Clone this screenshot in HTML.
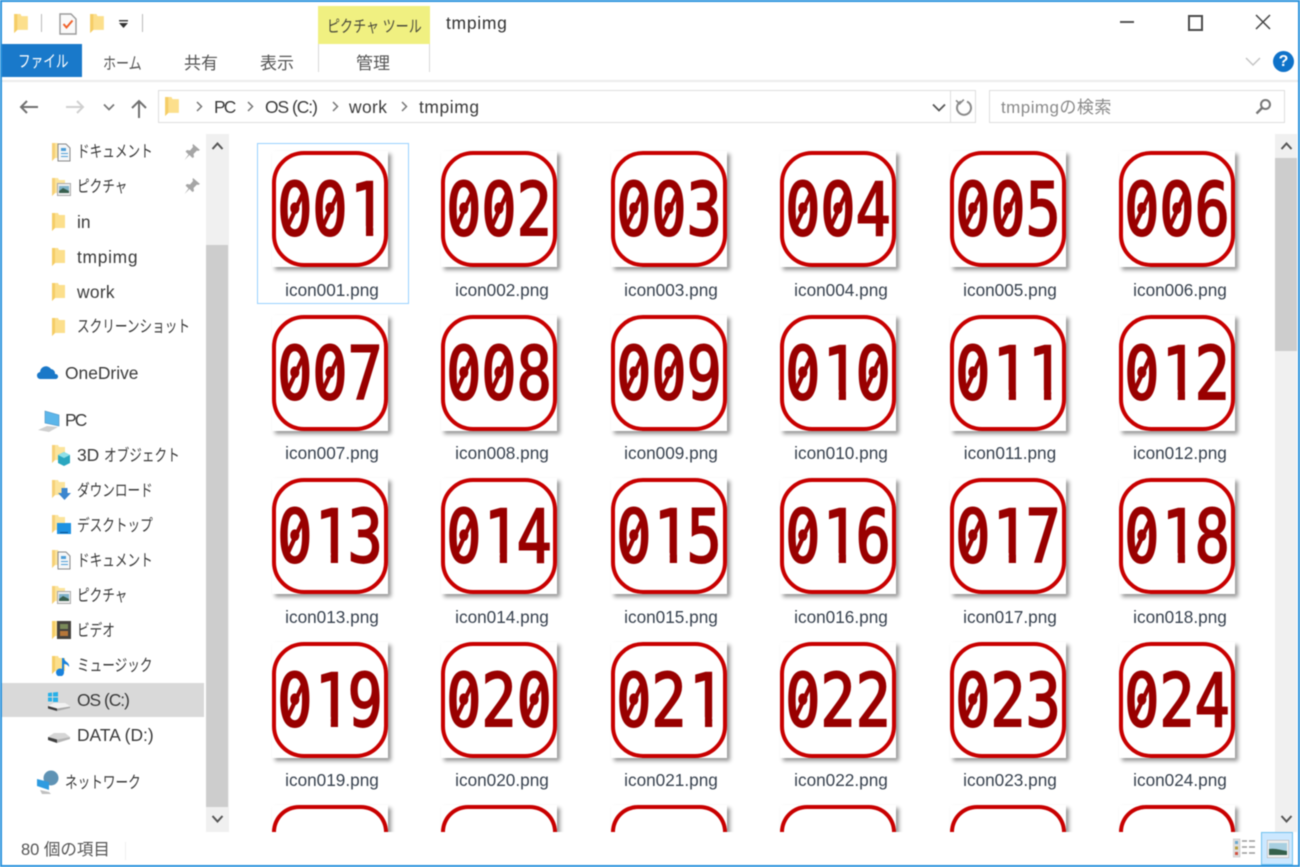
<!DOCTYPE html>
<html lang="ja"><head><meta charset="utf-8"><title>tmpimg</title>
<style>
html,body{margin:0;padding:0;background:#fff;width:1300px;height:867px;overflow:hidden}
#w{position:relative;width:1300px;height:867px;overflow:hidden;background:#fff;font-family:"Liberation Sans","Noto Sans CJK JP",sans-serif;font-size:17.4px;color:#3a3a3a;filter:blur(.45px)}
#w div,#w svg{position:absolute}
.t{line-height:20px;white-space:nowrap}
.j{display:inline-block;transform:scaleX(.765);transform-origin:0 50%;font-size:16.5px}
.ic{width:116px;height:116px;background:#fff;box-shadow:3px 3px 4px rgba(0,0,0,.42)}
.ic i{position:absolute;left:0;top:0;width:108px;height:108px;border:4px solid #c80000;border-radius:32px}
.ic.c{height:27px}
.ic.c i{height:23px;border-bottom:0;border-radius:32px 32px 0 0}
.ic b{position:absolute;left:-10px;width:136px;top:25px;height:70px;text-align:center;font:normal 73px/70px "DejaVu Sans Mono",monospace;color:#990000;-webkit-text-stroke:2px #990000;transform:scaleX(.8)}
.ic u,.ic s{position:relative;display:inline-block;text-decoration:none}
.ic u::after{content:"";position:absolute;left:19.500px;top:14.500px;width:5px;height:38px;background:#990000;transform:rotate(30deg)}
.ic s{left:3px;clip-path:polygon(0 0,100% 0,100% 50px,29px 50px,29px 100%,20px 100%,20px 50px,0 50px)}
.l{width:170px;text-align:center;line-height:20px;color:#38424f;font-size:17.2px}
</style></head><body>
<div id="w">
<svg width="0" height="0" style="left:0;top:0"><defs>
<symbol id="f" viewBox="0 0 13 19"><path d="M0 1h6l1 2h6v13H3l-3 3z" fill="#fcdf8c"/><path d="M0 1h3v15l-3 3z" fill="#f5cd66"/></symbol>
<symbol id="f2" viewBox="0 0 13 19"><path d="M0 1h6l1 2h6v13H3l-3 3z" fill="#fce49c"/><path d="M0 1h3v15l-3 3z" fill="#f6d077"/></symbol>
</defs></svg>

<!-- title -->
<svg style="left:14px;top:13px" width="15" height="20"><use href="#f" width="14" height="20"/></svg>
<div style="left:41px;top:14px;width:1px;height:18px;background:#bbb"></div>
<svg style="left:59px;top:13px" width="18" height="22" viewBox="0 0 18 22"><path d="M1 1h11l5 5v15H1z" fill="#fafafa" stroke="#9a9a9a" stroke-width="1.4"/><path d="M4.500 11l3 3.500 6-7" fill="none" stroke="#f0612a" stroke-width="2"/></svg>
<svg style="left:90px;top:13px" width="15" height="20"><use href="#f" width="14" height="20"/></svg>
<svg style="left:118px;top:19px" width="11" height="11"><rect x="1" y="1" width="9" height="1.500" fill="#444"/><path d="M1 4h9l-4.500 5z" fill="#333"/></svg>
<div style="left:142px;top:14px;width:1px;height:18px;background:#bbb"></div>

<div style="left:318px;top:6px;width:112px;height:38px;background:#f0f081"></div>
<div class="t" style="left:327px;top:16px;width:94px"><span class="j" style="color:#4c4c3c;transform:scaleX(.79)">ピクチャ ツール</span></div>
<div class="t" style="left:446px;top:13px;color:#333;font-size:17.5px;letter-spacing:.7px">tmpimg</div>

<div style="left:1120px;top:21px;width:14px;height:2px;background:#555"></div>
<div style="left:1188px;top:15px;width:11px;height:12px;border:2px solid #4a4a4a"></div>
<svg style="left:1255px;top:14px" width="16" height="16"><path d="M1 1l14 14M15 1L1 15" stroke="#444" stroke-width="1.500"/></svg>

<!-- ribbon -->
<div style="left:1px;top:44px;width:81px;height:33px;background:#1979ca"></div>
<div class="t" style="left:18px;top:51px;color:#fff"><span class="j" style="color:#fff">ファイル</span></div>
<div class="t" style="left:103px;top:53px"><span class="j" style="color:#555;transform:scaleX(.79)">ホーム</span></div>
<div class="t" style="left:184px;top:54px;font-size:17px;color:#555">共有</div>
<div class="t" style="left:260px;top:54px;font-size:17px;color:#555">表示</div>
<div style="left:318px;top:44px;width:1px;height:28px;background:#d8d8d8"></div>
<div style="left:429px;top:44px;width:1px;height:28px;background:#d8d8d8"></div>
<div class="t" style="left:356px;top:54px;font-size:17px;color:#555">管理</div>
<svg style="left:1245px;top:57px" width="16" height="10"><path d="M1 1l7 7 7-7" fill="none" stroke="#c4c4c4" stroke-width="1.500"/></svg>
<div style="left:1273px;top:51px;width:21px;height:21px;border-radius:50%;background:#0f72c9;color:#fff;font:bold 16px/21px 'Liberation Sans',sans-serif;text-align:center">?</div>
<div style="left:2px;top:80px;width:1296px;height:2px;background:#ebebeb"></div>

<!-- nav -->
<svg style="left:19px;top:99px" width="20" height="16"><path d="M19 8H2M8 2L2 8l6 6" fill="none" stroke="#707070" stroke-width="2"/></svg>
<svg style="left:65px;top:99px" width="20" height="16"><path d="M1 8h17M12 2l6 6-6 6" fill="none" stroke="#d0d0d0" stroke-width="2"/></svg>
<svg style="left:103px;top:103px" width="12" height="9"><path d="M1 1.500l5 5 5-5" fill="none" stroke="#777" stroke-width="1.700"/></svg>
<svg style="left:130px;top:99px" width="18" height="20"><path d="M9 19V2M2 9l7-7 7 7" fill="none" stroke="#707070" stroke-width="2"/></svg>
<div style="left:158px;top:90px;width:816px;height:31px;border:1px solid #dedede"></div>
<div style="left:950px;top:91px;width:1px;height:31px;background:#dedede"></div>
<svg style="left:165px;top:96px" width="15" height="20"><use href="#f" width="14" height="20"/></svg>
<svg style="left:195px;top:100px" width="9" height="13"><path d="M2 2l4.500 4.500L2 11" fill="none" stroke="#777" stroke-width="1.500"/></svg>
<div class="t" style="left:214px;top:97px;color:#3a3a3a;letter-spacing:-1.800px">PC</div>
<svg style="left:246px;top:100px" width="9" height="13"><path d="M2 2l4.500 4.500L2 11" fill="none" stroke="#777" stroke-width="1.500"/></svg>
<div class="t" style="left:265px;top:97px;color:#3a3a3a;letter-spacing:-1px">OS (C:)</div>
<svg style="left:331px;top:100px" width="9" height="13"><path d="M2 2l4.500 4.500L2 11" fill="none" stroke="#777" stroke-width="1.500"/></svg>
<div class="t" style="left:349px;top:97px;color:#3a3a3a;letter-spacing:.4px">work</div>
<svg style="left:400px;top:100px" width="9" height="13"><path d="M2 2l4.500 4.500L2 11" fill="none" stroke="#777" stroke-width="1.500"/></svg>
<div class="t" style="left:419px;top:97px;color:#3a3a3a;letter-spacing:.6px">tmpimg</div>
<svg style="left:932px;top:103px" width="14" height="10"><path d="M1 1.500l6 6 6-6" fill="none" stroke="#555" stroke-width="1.800"/></svg>
<svg style="left:954px;top:98px" width="19" height="19" viewBox="0 0 19 19"><path d="M7 3.500A7 7 0 1 0 13 3.500" fill="none" stroke="#8a8a8a" stroke-width="2"/><path d="M8 0v6H3" fill="none" stroke="#8a8a8a" stroke-width="1.600" transform="rotate(45 7 3)"/></svg>
<div style="left:989px;top:90px;width:294px;height:31px;border:1px solid #dedede"></div>
<div class="t" style="left:1001px;top:97.500px;color:#8a8a8a;font-size:17px;letter-spacing:.45px">tmpimgの検索</div>
<svg style="left:1255px;top:98px" width="17" height="17"><circle cx="10.500" cy="6.500" r="4.500" fill="none" stroke="#777" stroke-width="2"/><path d="M7 10l-5.500 5.500" stroke="#777" stroke-width="2.400"/></svg>

<!-- sidebar -->
<div style="left:2px;top:683px;width:202px;height:34px;background:#d9d9d9"></div>

<svg style="left:52px;top:142px" width="13" height="19"><use href="#f2" width="13" height="19"/></svg>
<svg style="left:57px;top:143px" width="14" height="19" viewBox="0 0 14 19"><path d="M1 1h8l4 4v13H1z" fill="#f4f6f8" stroke="#888"/><path d="M4 5h5v3H4zM4 10h7v1H4zM4 13h7v1H4z" fill="#4f9fd8"/></svg>
<svg style="left:52px;top:177px" width="13" height="19"><use href="#f2" width="13" height="19"/></svg>
<svg style="left:57px;top:183px" width="14" height="13" viewBox="0 0 14 13"><rect x=".5" y=".5" width="13" height="12" fill="#eee" stroke="#aaa"/><rect x="2" y="3" width="10" height="7" fill="#7fb2c8"/><path d="M2 8l4-3 6 3v2H2z" fill="#39604f"/></svg>
<svg style="left:52px;top:212px" width="13" height="19"><use href="#f" width="13" height="19"/></svg>
<svg style="left:52px;top:247px" width="13" height="19"><use href="#f" width="13" height="19"/></svg>
<svg style="left:52px;top:282px" width="13" height="19"><use href="#f" width="13" height="19"/></svg>
<svg style="left:52px;top:317px" width="13" height="19"><use href="#f" width="13" height="19"/></svg>
<svg style="left:37px;top:364px" width="22" height="16" viewBox="0 0 22 16"><path d="M4 15a3.500 3.500 0 0 1-1-7 6 6 0 0 1 11-3 4.500 4.500 0 0 1 4 5 2.500 2.500 0 0 1 1 5z" fill="#1a78c8"/></svg>
<svg style="left:37px;top:410px" width="24" height="22" viewBox="0 0 24 22"><path d="M8 1l14 4v11L8 13z" fill="#5cb6ea" stroke="#4a8fc0" stroke-width=".6"/><path d="M1 20l9-4 11 1-9 5z" fill="#cfcfcf"/></svg>
<svg style="left:52px;top:444px" width="13" height="19"><use href="#f2" width="13" height="19"/></svg>
<svg style="left:58px;top:452px" width="12" height="14" viewBox="0 0 12 14"><path d="M6 0l6 3v8l-6 3-6-3V3z" fill="#2aa7c0"/><path d="M6 0l6 3-6 3-6-3z" fill="#8fe0e8"/></svg>
<svg style="left:52px;top:479px" width="13" height="19"><use href="#f2" width="13" height="19"/></svg>
<svg style="left:58px;top:488px" width="13" height="12" viewBox="0 0 13 12"><path d="M3.500 0h6v5H13L6.500 12 0 5h3.500z" fill="#3b86cf"/></svg>
<svg style="left:52px;top:514px" width="13" height="19"><use href="#f2" width="13" height="19"/></svg>
<svg style="left:57px;top:523px" width="14" height="11"><rect width="14" height="11" fill="#1e92e2"/><rect x="3" y="9" width="8" height="1" fill="#0a4f90"/></svg>
<svg style="left:52px;top:549px" width="13" height="19"><use href="#f2" width="13" height="19"/></svg>
<svg style="left:57px;top:551px" width="14" height="19" viewBox="0 0 14 19"><path d="M1 1h8l4 4v13H1z" fill="#f4f6f8" stroke="#888"/><path d="M4 5h5v3H4zM4 10h7v1H4zM4 13h7v1H4z" fill="#4f9fd8"/></svg>
<svg style="left:52px;top:585px" width="13" height="19"><use href="#f2" width="13" height="19"/></svg>
<svg style="left:57px;top:591px" width="14" height="13" viewBox="0 0 14 13"><rect x=".5" y=".5" width="13" height="12" fill="#eee" stroke="#aaa"/><rect x="2" y="3" width="10" height="7" fill="#7fb2c8"/><path d="M2 8l4-3 6 3v2H2z" fill="#39604f"/></svg>
<svg style="left:52px;top:620px" width="13" height="19"><use href="#f" width="13" height="19"/></svg>
<svg style="left:57px;top:621px" width="14" height="18" viewBox="0 0 14 18"><rect width="14" height="18" fill="#45423e"/><rect x="3" y="3" width="8" height="5" fill="#7a8a5a"/><rect x="3" y="10" width="8" height="5" fill="#b5763a"/></svg>
<svg style="left:52px;top:655px" width="13" height="19"><use href="#f" width="13" height="19"/></svg>
<svg style="left:56px;top:657px" width="15" height="19" viewBox="0 0 15 19"><path d="M6 1h2c0 4 6 4 5 9-1-2-3-3-5-3v8a4 4 0 1 1-2-3z" fill="#1a82dc"/></svg>
<svg style="left:47px;top:692px" width="24" height="20" viewBox="0 0 24 20"><path d="M1 1l4-.500v4H1zM6 .500l5-.500v4.500H6zM1 5.500h4v4H1zM6 5.500h5V10H6z" fill="#27b0e8"/><path d="M1 14l6-3h11l5 3v1l-13 3z" fill="#f2f2f2"/><path d="M1 14l9 2.500V19l-9-2.500z" fill="#3a3a3a"/><path d="M10 16.500l13-2v1.500l-13 3z" fill="#a8a8a8"/></svg>
<svg style="left:47px;top:729px" width="24" height="16" viewBox="0 0 24 16"><path d="M1 8l6-4h11l5 4-13 2.500z" fill="#d6d6d6"/><path d="M1 8l9 2.500V14l-9-3z" fill="#3e3e3e"/><path d="M10 10.500l13-2.500v2l-13 4z" fill="#b4b4b4"/></svg>
<svg style="left:36px;top:770px" width="24" height="24" viewBox="0 0 24 24"><circle cx="15" cy="8" r="7.500" fill="#5f93b5"/><path d="M1 9l12 3v8L1 16z" fill="#2e9be0"/><path d="M4 20l9 2 2 2H6z" fill="#c0c0c0"/></svg>

<svg style="left:183px;top:143px" width="18" height="18" viewBox="0 0 18 18"><path d="M10 1l7 6-2 1-1-.500-3.500 3.500.500 3-1.500 1-3-3-5 5 4-5.500-3-3 1.500-1.500 3 .500L10 4l-.500-1.500z" fill="#a6a6a6"/></svg>
<svg style="left:183px;top:177px" width="18" height="18" viewBox="0 0 18 18"><path d="M10 1l7 6-2 1-1-.500-3.500 3.500.500 3-1.500 1-3-3-5 5 4-5.500-3-3 1.500-1.500 3 .500L10 4l-.500-1.500z" fill="#a6a6a6"/></svg>

<div class="t" style="left:77px;top:141px"><span class="j">ドキュメント</span></div>
<div class="t" style="left:77px;top:176px"><span class="j">ピクチャ</span></div>
<div class="t" style="left:77px;top:212px">in</div>
<div class="t" style="left:77px;top:247px;letter-spacing:.7px">tmpimg</div>
<div class="t" style="left:77px;top:282px;letter-spacing:.3px">work</div>
<div class="t" style="left:77px;top:316px"><span class="j">スクリーンショット</span></div>
<div class="t" style="left:65px;top:363px">OneDrive</div>
<div class="t" style="left:65px;top:410px;letter-spacing:-1.800px">PC</div>
<div class="t" style="left:77px;top:445px">3D <span class="j">オブジェクト</span></div>
<div class="t" style="left:77px;top:480px"><span class="j">ダウンロード</span></div>
<div class="t" style="left:77px;top:515px"><span class="j">デスクトップ</span></div>
<div class="t" style="left:77px;top:550px"><span class="j">ドキュメント</span></div>
<div class="t" style="left:77px;top:585px"><span class="j">ピクチャ</span></div>
<div class="t" style="left:77px;top:620px"><span class="j">ビデオ</span></div>
<div class="t" style="left:77px;top:655px"><span class="j">ミュージック</span></div>
<div class="t" style="left:77px;top:690px;letter-spacing:-1px">OS (C:)</div>
<div class="t" style="left:77px;top:725px">DATA (D:)</div>
<div class="t" style="left:65px;top:772px"><span class="j">ネットワーク</span></div>

<!-- sidebar scrollbar -->
<div style="left:206px;top:134px;width:23px;height:698px;background:#f0f0f0"></div>
<div style="left:206px;top:245px;width:22px;height:562px;background:#cdcdcd"></div>
<svg style="left:211px;top:141px" width="13" height="10"><path d="M1.500 8l5-5.500 5 5.500" fill="none" stroke="#555" stroke-width="2"/></svg>
<svg style="left:211px;top:814px" width="13" height="10"><path d="M1.500 2l5 5.500 5-5.500" fill="none" stroke="#555" stroke-width="2"/></svg>

<!-- content -->
<div style="left:0;top:0;width:1276px;height:832px;overflow:hidden">
<div style="left:257px;top:143px;width:150px;height:159px;border:1px solid #99d1ff"></div>

<div class="ic" style="left:271.500px;top:151px"><i></i><b><u>0</u><u>0</u><s>1</s></b></div>
<div class="ic" style="left:441px;top:151px"><i></i><b><u>0</u><u>0</u>2</b></div>
<div class="ic" style="left:610.500px;top:151px"><i></i><b><u>0</u><u>0</u>3</b></div>
<div class="ic" style="left:780px;top:151px"><i></i><b><u>0</u><u>0</u>4</b></div>
<div class="ic" style="left:949.500px;top:151px"><i></i><b><u>0</u><u>0</u>5</b></div>
<div class="ic" style="left:1119px;top:151px"><i></i><b><u>0</u><u>0</u>6</b></div>
<div class="l" style="left:247px;top:279.500px">icon001.png</div>
<div class="l" style="left:417px;top:279.500px">icon002.png</div>
<div class="l" style="left:586px;top:279.500px">icon003.png</div>
<div class="l" style="left:756px;top:279.500px">icon004.png</div>
<div class="l" style="left:925px;top:279.500px">icon005.png</div>
<div class="l" style="left:1095px;top:279.500px">icon006.png</div>

<div class="ic" style="left:271.500px;top:315px"><i></i><b><u>0</u><u>0</u>7</b></div>
<div class="ic" style="left:441px;top:315px"><i></i><b><u>0</u><u>0</u>8</b></div>
<div class="ic" style="left:610.500px;top:315px"><i></i><b><u>0</u><u>0</u>9</b></div>
<div class="ic" style="left:780px;top:315px"><i></i><b><u>0</u><s>1</s><u>0</u></b></div>
<div class="ic" style="left:949.500px;top:315px"><i></i><b><u>0</u><s>1</s><s>1</s></b></div>
<div class="ic" style="left:1119px;top:315px"><i></i><b><u>0</u><s>1</s>2</b></div>
<div class="l" style="left:247px;top:443px">icon007.png</div>
<div class="l" style="left:417px;top:443px">icon008.png</div>
<div class="l" style="left:586px;top:443px">icon009.png</div>
<div class="l" style="left:756px;top:443px">icon010.png</div>
<div class="l" style="left:925px;top:443px">icon011.png</div>
<div class="l" style="left:1095px;top:443px">icon012.png</div>

<div class="ic" style="left:271.500px;top:478px"><i></i><b><u>0</u><s>1</s>3</b></div>
<div class="ic" style="left:441px;top:478px"><i></i><b><u>0</u><s>1</s>4</b></div>
<div class="ic" style="left:610.500px;top:478px"><i></i><b><u>0</u><s>1</s>5</b></div>
<div class="ic" style="left:780px;top:478px"><i></i><b><u>0</u><s>1</s>6</b></div>
<div class="ic" style="left:949.500px;top:478px"><i></i><b><u>0</u><s>1</s>7</b></div>
<div class="ic" style="left:1119px;top:478px"><i></i><b><u>0</u><s>1</s>8</b></div>
<div class="l" style="left:247px;top:606.500px">icon013.png</div>
<div class="l" style="left:417px;top:606.500px">icon014.png</div>
<div class="l" style="left:586px;top:606.500px">icon015.png</div>
<div class="l" style="left:756px;top:606.500px">icon016.png</div>
<div class="l" style="left:925px;top:606.500px">icon017.png</div>
<div class="l" style="left:1095px;top:606.500px">icon018.png</div>

<div class="ic" style="left:271.500px;top:642px"><i></i><b><u>0</u><s>1</s>9</b></div>
<div class="ic" style="left:441px;top:642px"><i></i><b><u>0</u>2<u>0</u></b></div>
<div class="ic" style="left:610.500px;top:642px"><i></i><b><u>0</u>2<s>1</s></b></div>
<div class="ic" style="left:780px;top:642px"><i></i><b><u>0</u>22</b></div>
<div class="ic" style="left:949.500px;top:642px"><i></i><b><u>0</u>23</b></div>
<div class="ic" style="left:1119px;top:642px"><i></i><b><u>0</u>24</b></div>
<div class="l" style="left:247px;top:770px">icon019.png</div>
<div class="l" style="left:417px;top:770px">icon020.png</div>
<div class="l" style="left:586px;top:770px">icon021.png</div>
<div class="l" style="left:756px;top:770px">icon022.png</div>
<div class="l" style="left:925px;top:770px">icon023.png</div>
<div class="l" style="left:1095px;top:770px">icon024.png</div>

<div class="ic c" style="left:271.500px;top:805px"><i></i></div>
<div class="ic c" style="left:441px;top:805px"><i></i></div>
<div class="ic c" style="left:610.500px;top:805px"><i></i></div>
<div class="ic c" style="left:780px;top:805px"><i></i></div>
<div class="ic c" style="left:949.500px;top:805px"><i></i></div>
<div class="ic c" style="left:1119px;top:805px"><i></i></div>
</div>

<!-- main scrollbar -->
<div style="left:1275px;top:134px;width:22px;height:698px;background:#f0f0f0"></div>
<div style="left:1275px;top:158px;width:22px;height:193px;background:#cdcdcd"></div>
<svg style="left:1280px;top:141px" width="13" height="10"><path d="M1.500 8l5-5.500 5 5.500" fill="none" stroke="#555" stroke-width="2"/></svg>
<svg style="left:1280px;top:814px" width="13" height="10"><path d="M1.500 2l5 5.500 5-5.500" fill="none" stroke="#555" stroke-width="2"/></svg>

<!-- status bar -->
<div class="t" style="left:21px;top:840px;color:#555;font-size:16.500px">80 個の項目</div>
<div style="left:125px;top:842px;width:1px;height:18px;background:#f0f0f0"></div>
<svg style="left:1233px;top:838px" width="24" height="20" viewBox="0 0 24 20"><rect x="0" y="1" width="7" height="18" fill="#ddd" stroke="#bbb" stroke-width=".5"/><rect x="2" y="3" width="3" height="3" fill="#6aa9d0"/><rect x="2" y="8.500" width="3" height="3" fill="#b8a040"/><rect x="2" y="14" width="3" height="3" fill="#d05040"/><path d="M9 3h5M16 3h6M9 9h5M16 9h6M9 15h5M16 15h6" stroke="#9a9a9a" stroke-width="1.500"/></svg>
<div style="left:1261px;top:832px;width:30px;height:31px;background:#cce8ff;border:1px solid #6fc0ee"></div>
<svg style="left:1267px;top:840px" width="22" height="18" viewBox="0 0 22 18"><rect width="22" height="18" fill="#eee" stroke="#aaa"/><rect x="2" y="3" width="18" height="12" fill="#a8cfe0"/><path d="M2 9c6-1 12 1 18 2v4H2z" fill="#34604c"/></svg>

<!-- window border -->
<div style="left:0;top:0;width:1300px;height:2px;background:#2d93dc"></div>
<div style="left:0;top:0;width:2px;height:867px;background:#2d93dc"></div>
<div style="left:1298px;top:0;width:2px;height:867px;background:#2d93dc"></div>
<div style="left:0;top:865px;width:1300px;height:2px;background:#2d93dc"></div>
</div>
</body></html>
